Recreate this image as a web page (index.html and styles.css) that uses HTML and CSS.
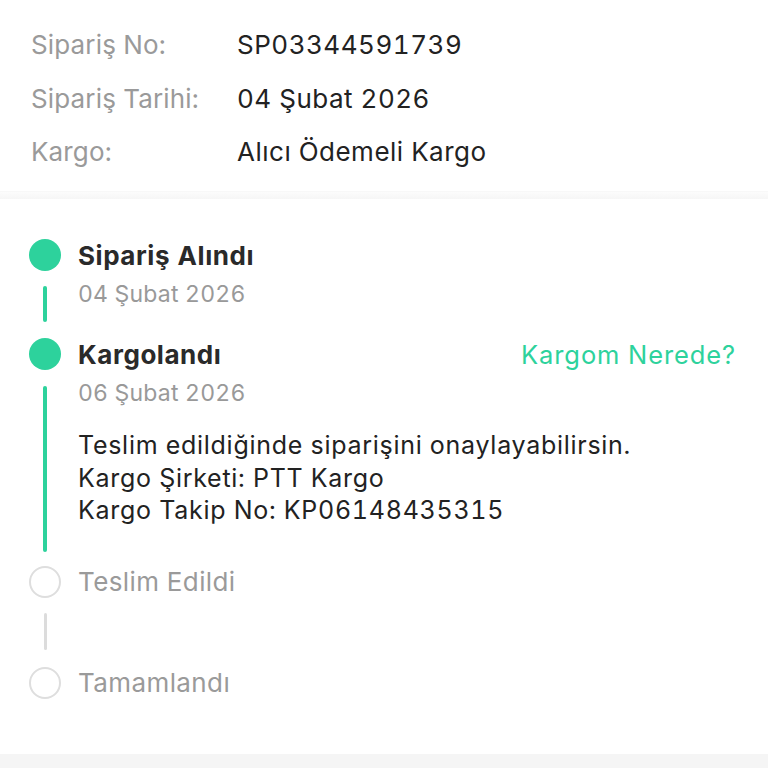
FILE: index.html
```html
<!DOCTYPE html>
<html lang="tr">
<head>
<meta charset="utf-8">
<link rel="stylesheet" href="styles.css">
</head>
<body>
<section class="info">
  <div class="row"><span class="label">Sipariş No:</span><span class="value">SP03344591739</span></div>
  <div class="row"><span class="label">Sipariş Tarihi:</span><span class="value">04 Şubat 2026</span></div>
  <div class="row"><span class="label">Kargo:</span><span class="value">Alıcı Ödemeli Kargo</span></div>
</section>
<div class="divider"></div>
<section class="timeline">
  <div class="step done">
    <div class="dot"></div>
    <div class="head"><span class="title">Sipariş Alındı</span></div>
    <div class="rail"><div class="line s1"></div></div>
    <div class="details d1"><div class="date">04 Şubat 2026</div></div>
  </div>
  <div class="step done">
    <div class="dot"></div>
    <div class="head"><span class="title">Kargolandı</span><a class="link">Kargom Nerede?</a></div>
    <div class="rail"><div class="line s2"></div></div>
    <div class="details d2">
      <div class="date">06 Şubat 2026</div>
      <div class="body">Teslim edildiğinde siparişini onaylayabilirsin.<br>Kargo Şirketi: PTT Kargo<br>Kargo Takip No: KP06148435315</div>
    </div>
  </div>
  <div class="step todo">
    <div class="dot"></div>
    <div class="head"><span class="title">Teslim Edildi</span></div>
    <div class="rail"><div class="line s3"></div></div>
    <div class="details d3"></div>
  </div>
  <div class="step todo">
    <div class="dot"></div>
    <div class="head"><span class="title">Tamamlandı</span></div>
  </div>
</section>
<div class="footer-band"></div>
</body>
</html>
```
FILE: styles.css
```css
html, body {
  margin: 0;
  padding: 0;
  background: #ffffff;
  font-family: Inter, "Noto Sans", "Liberation Sans", sans-serif;
  font-feature-settings: "tnum";
}
body {
  width: 768px;
  height: 768px;
  overflow: hidden;
  display: flex;
  flex-direction: column;
}
.info {
  padding: 18px 0 0 31px;
  height: 173px;
  box-sizing: border-box;
}
.row {
  display: grid;
  grid-template-columns: 206px 1fr;
  height: 53.5px;
  align-items: center;
  font-size: 26px;
}
.label { color: #9a9a9a; letter-spacing: 0.15px; }
.value { color: #222222; letter-spacing: 0.5px; }
.divider {
  height: 7px;
  background: linear-gradient(#fcfcfc, #f6f6f6);
  border-top: 1px solid #f8f8f8;
  margin-top: 18px;
}
.timeline {
  padding: 40px 32px 0 29px;
  flex: 1;
}
.step {
  display: grid;
  grid-template-columns: 32px 1fr;
  column-gap: 17px;
}
.dot {
  width: 32px;
  height: 32px;
  border-radius: 50%;
  box-sizing: border-box;
}
.done .dot { background: #2dd29c; }
.todo .dot { border: 2px solid #dedede; background: #fff; }
.head {
  display: flex;
  align-items: center;
  justify-content: space-between;
  height: 32px;
}
.title {
  font-size: 26px;
  color: #2a2a2a;
}
.done .title { font-weight: 700; letter-spacing: 0.55px; }
.todo .title { color: #9a9a9a; letter-spacing: 0.4px; }
.link {
  color: #2dd29c;
  font-size: 25.5px;
  letter-spacing: 0.9px;
  margin-right: 0;
}
.rail {
  display: flex;
  justify-content: center;
}
.line {
  width: 4px;
  border-radius: 2px;
}
.done .line { background: #2dd29c; }
.todo .line { background: #dcdcdc; width: 3px; }
.s1 { margin: 15px 0 16px; }
.s2 { margin: 16px 0 14px; }
.s3 { margin: 15px 0 17px; }
.date {
  color: #999999;
  font-size: 23px;
  line-height: 30px;
  letter-spacing: 0.2px;
}
.d1 { padding: 8px 0 29px; }
.d2 { padding: 8px 0 39px; }
.d2 .body {
  margin-top: 21px;
  color: #222222;
  font-size: 25px;
  line-height: 32.5px;
  letter-spacing: 0.72px;
}
.d3 { height: 69px; }
.footer-band {
  height: 14px;
  background: #f5f5f5;
  flex: none;
}
```
